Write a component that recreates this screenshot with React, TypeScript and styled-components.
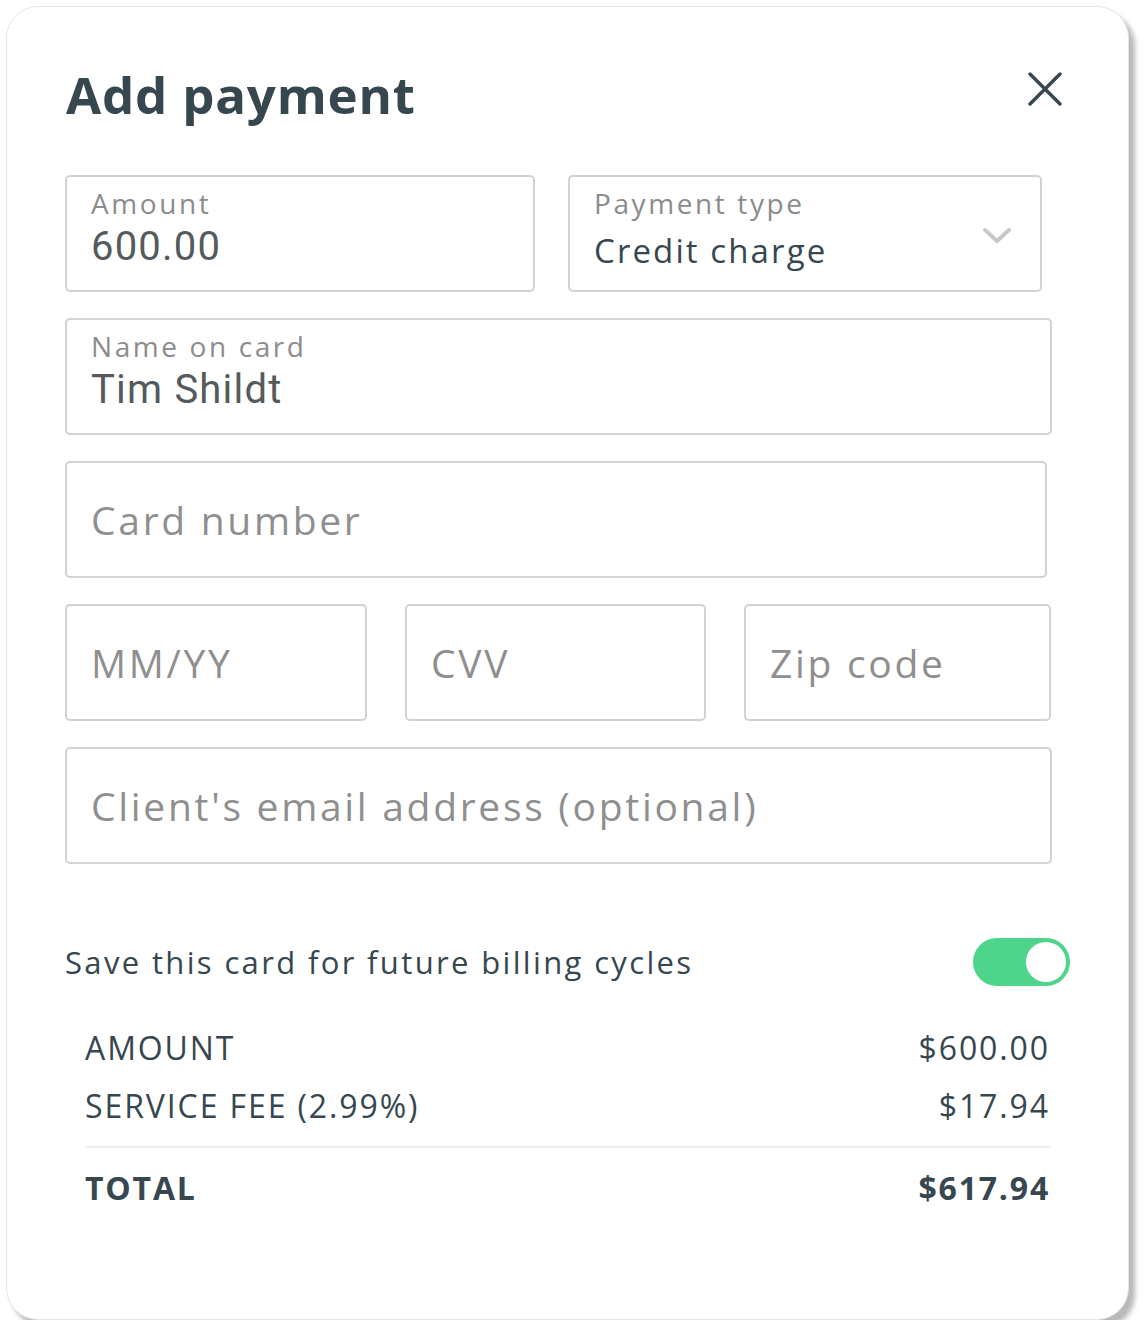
import React from "react";
import styled, { createGlobalStyle } from "styled-components";

const GlobalStyle = createGlobalStyle`
  html, body { margin: 0; padding: 0; background: #ffffff; }
  body { font-family: "Open Sans", "Lato", sans-serif; }
  * { box-sizing: border-box; }
`;

const Card = styled.div`
  margin: 6px 0 0 6px;
  width: 1123px;
  height: 1314px;
  background: #ffffff;
  border: 1px solid #e6e6e6;
  border-radius: 32px;
  box-shadow: 6px 7px 5px rgba(0, 0, 0, 0.28);
  padding: 55px 58px 0 58px;
  color: #37474f;
`;

const Header = styled.div`
  display: flex;
  justify-content: space-between;
  align-items: flex-start;
  padding-right: 8px;
`;

const Title = styled.h1`
  margin: 0 0 0 1px;
  font-size: 51px;
  font-weight: 700;
  line-height: 64px;
  color: #37474f;
  letter-spacing: 0.8px;
`;

const CloseButton = styled.button`
  border: none;
  background: none;
  padding: 0;
  margin-top: 10px;
  width: 34px;
  height: 34px;
  cursor: pointer;
  display: flex;
`;

const Form = styled.div`
  margin-top: 49px;
  display: flex;
  flex-direction: column;
  gap: 26px;
`;

const Row = styled.div<{ $gap?: number }>`
  display: flex;
  gap: ${(p) => p.$gap ?? 33}px;
`;

const Field = styled.div<{ $w: number; $filled?: boolean }>`
  position: relative;
  width: ${(p) => p.$w}px;
  height: 117px;
  border: 2px solid #d2d2d2;
  border-radius: 5px;
  padding: ${(p) => (p.$filled ? "7px 24px 0" : "0 24px")};
  display: flex;
  flex-direction: column;
  justify-content: ${(p) => (p.$filled ? "flex-start" : "center")};
`;

const Label = styled.div`
  font-size: 28px;
  line-height: 38px;
  color: #8c8c8c;
  letter-spacing: 2.6px;
`;

const Value = styled.div`
  font-family: "Roboto", "Open Sans", sans-serif;
  font-size: 40px;
  line-height: 50px;
  color: #555a5c;
  letter-spacing: 1.2px;
`;

const SelectValue = styled.div`
  font-size: 33px;
  line-height: 48px;
  margin-top: 5px;
  color: #37474f;
  letter-spacing: 2.1px;
`;

const Placeholder = styled.div`
  font-size: 39px;
  line-height: 48px;
  color: #8f8f8f;
  letter-spacing: 2.7px;
`;

const Chevron = styled.svg`
  position: absolute;
  right: 28px;
  top: 50px;
`;

const ToggleRow = styled.div`
  margin-top: 74px;
  display: flex;
  justify-content: space-between;
  align-items: center;
`;

const ToggleLabel = styled.div`
  font-size: 31px;
  color: #37474f;
  letter-spacing: 2.35px;
`;

const Toggle = styled.div`
  width: 97px;
  height: 48px;
  border-radius: 24px;
  background: #4fd48b;
  padding: 4px;
  display: flex;
  justify-content: flex-end;
`;

const Knob = styled.div`
  width: 40px;
  height: 40px;
  border-radius: 50%;
  background: #ffffff;
`;

const Summary = styled.div`
  margin: 32px 20px 0 20px;
  display: flex;
  flex-direction: column;
`;

const SumRow = styled.div<{ $bold?: boolean }>`
  display: flex;
  justify-content: space-between;
  align-items: center;
  height: 58px;
  font-size: 32px;
  font-weight: ${(p) => (p.$bold ? 700 : 400)};
  letter-spacing: ${(p) => (p.$bold ? 1.8 : 1.9)}px;
  color: #37474f;
`;

const Divider = styled.div`
  height: 2px;
  background: #eeeeee;
  margin: 12px 0 10px;
`;

export default function App() {
  return (
    <>
      <GlobalStyle />
      <Card>
        <Header>
          <Title>Add payment</Title>
          <CloseButton aria-label="Close">
            <svg width="34" height="34" viewBox="0 0 34 34">
              <path d="M2 2 L32 32 M32 2 L2 32" stroke="#37474f" strokeWidth="3.4" strokeLinecap="round" />
            </svg>
          </CloseButton>
        </Header>
        <Form>
          <Row $gap={33}>
            <Field $w={470} $filled>
              <Label>Amount</Label>
              <Value>600.00</Value>
            </Field>
            <Field $w={474} $filled>
              <Label>Payment type</Label>
              <SelectValue>Credit charge</SelectValue>
              <Chevron width="30" height="18" viewBox="0 0 30 18">
                <path d="M3 3 L15 14 L27 3" stroke="#c8c8c8" strokeWidth="4" fill="none" strokeLinecap="round" strokeLinejoin="round" />
              </Chevron>
            </Field>
          </Row>
          <Field $w={987} $filled>
            <Label>Name on card</Label>
            <Value>Tim Shildt</Value>
          </Field>
          <Field $w={982}>
            <Placeholder>Card number</Placeholder>
          </Field>
          <Row $gap={38}>
            <Field $w={302}>
              <Placeholder>MM/YY</Placeholder>
            </Field>
            <Field $w={301}>
              <Placeholder>CVV</Placeholder>
            </Field>
            <Field $w={307}>
              <Placeholder>Zip code</Placeholder>
            </Field>
          </Row>
          <Field $w={987}>
            <Placeholder>Client's email address (optional)</Placeholder>
          </Field>
        </Form>
        <ToggleRow>
          <ToggleLabel>Save this card for future billing cycles</ToggleLabel>
          <Toggle>
            <Knob />
          </Toggle>
        </ToggleRow>
        <Summary>
          <SumRow>
            <span>AMOUNT</span>
            <span>$600.00</span>
          </SumRow>
          <SumRow>
            <span>SERVICE FEE (2.99%)</span>
            <span>$17.94</span>
          </SumRow>
          <Divider />
          <SumRow $bold>
            <span>TOTAL</span>
            <span>$617.94</span>
          </SumRow>
        </Summary>
      </Card>
    </>
  );
}
